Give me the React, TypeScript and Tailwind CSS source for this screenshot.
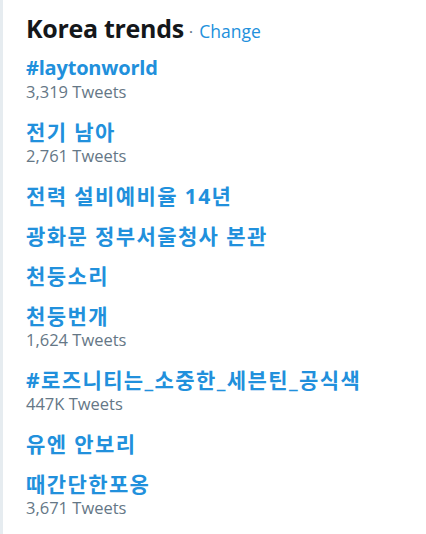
const TRENDS = [
  { name: '#laytonworld', tweets: '3,319 Tweets' },
  { name: '전기 남아', tweets: '2,761 Tweets', ko: true },
  { name: '전력 설비예비율 14년', ko: true },
  { name: '광화문 정부서울청사 본관', ko: true },
  { name: '천둥소리', ko: true },
  { name: '천둥번개', tweets: '1,624 Tweets', ko: true },
  { name: '#로즈니티는_소중한_세븐틴_공식색', tweets: '447K Tweets', ko: true },
  { name: '유엔 안보리', ko: true },
  { name: '때간단한포옹', tweets: '3,671 Tweets', ko: true },
]

const FONT = { fontFamily: '"Open Sans", "Noto Sans CJK KR", sans-serif' }

export default function App() {
  return (
    <div className="w-[426px] h-[534px] bg-white border-l-[3px] border-[#e6ecf0]" style={FONT}>
      <div className="pl-[23px] pt-3">
        {/* Header */}
        <div className="flex items-baseline h-8 mb-1">
          <h3 className="text-[25px] font-bold text-[#14171a] leading-8 tracking-[-0.3px]">
            Korea trends
          </h3>
          <span className="text-[17px] text-[#657786] ml-[5px] mr-[6px]">·</span>
          <a href="#" className="text-[17.5px] text-[#2190dc]">
            Change
          </a>
        </div>

        {/* Trend list */}
        <ul>
          {TRENDS.map((t) => (
            <li key={t.name} className="py-2">
              <div
                className={
                  t.ko
                    ? 'text-[21px] leading-6 font-bold text-[#2190dc] tracking-[1.4px]'
                    : 'text-[20px] leading-6 font-bold text-[#2190dc] tracking-[-0.2px]'
                }
              >
                {t.name}
              </div>
              {t.tweets && (
                <div className="text-[16.5px] leading-6 text-[#657786]">{t.tweets}</div>
              )}
            </li>
          ))}
        </ul>
      </div>
    </div>
  )
}
